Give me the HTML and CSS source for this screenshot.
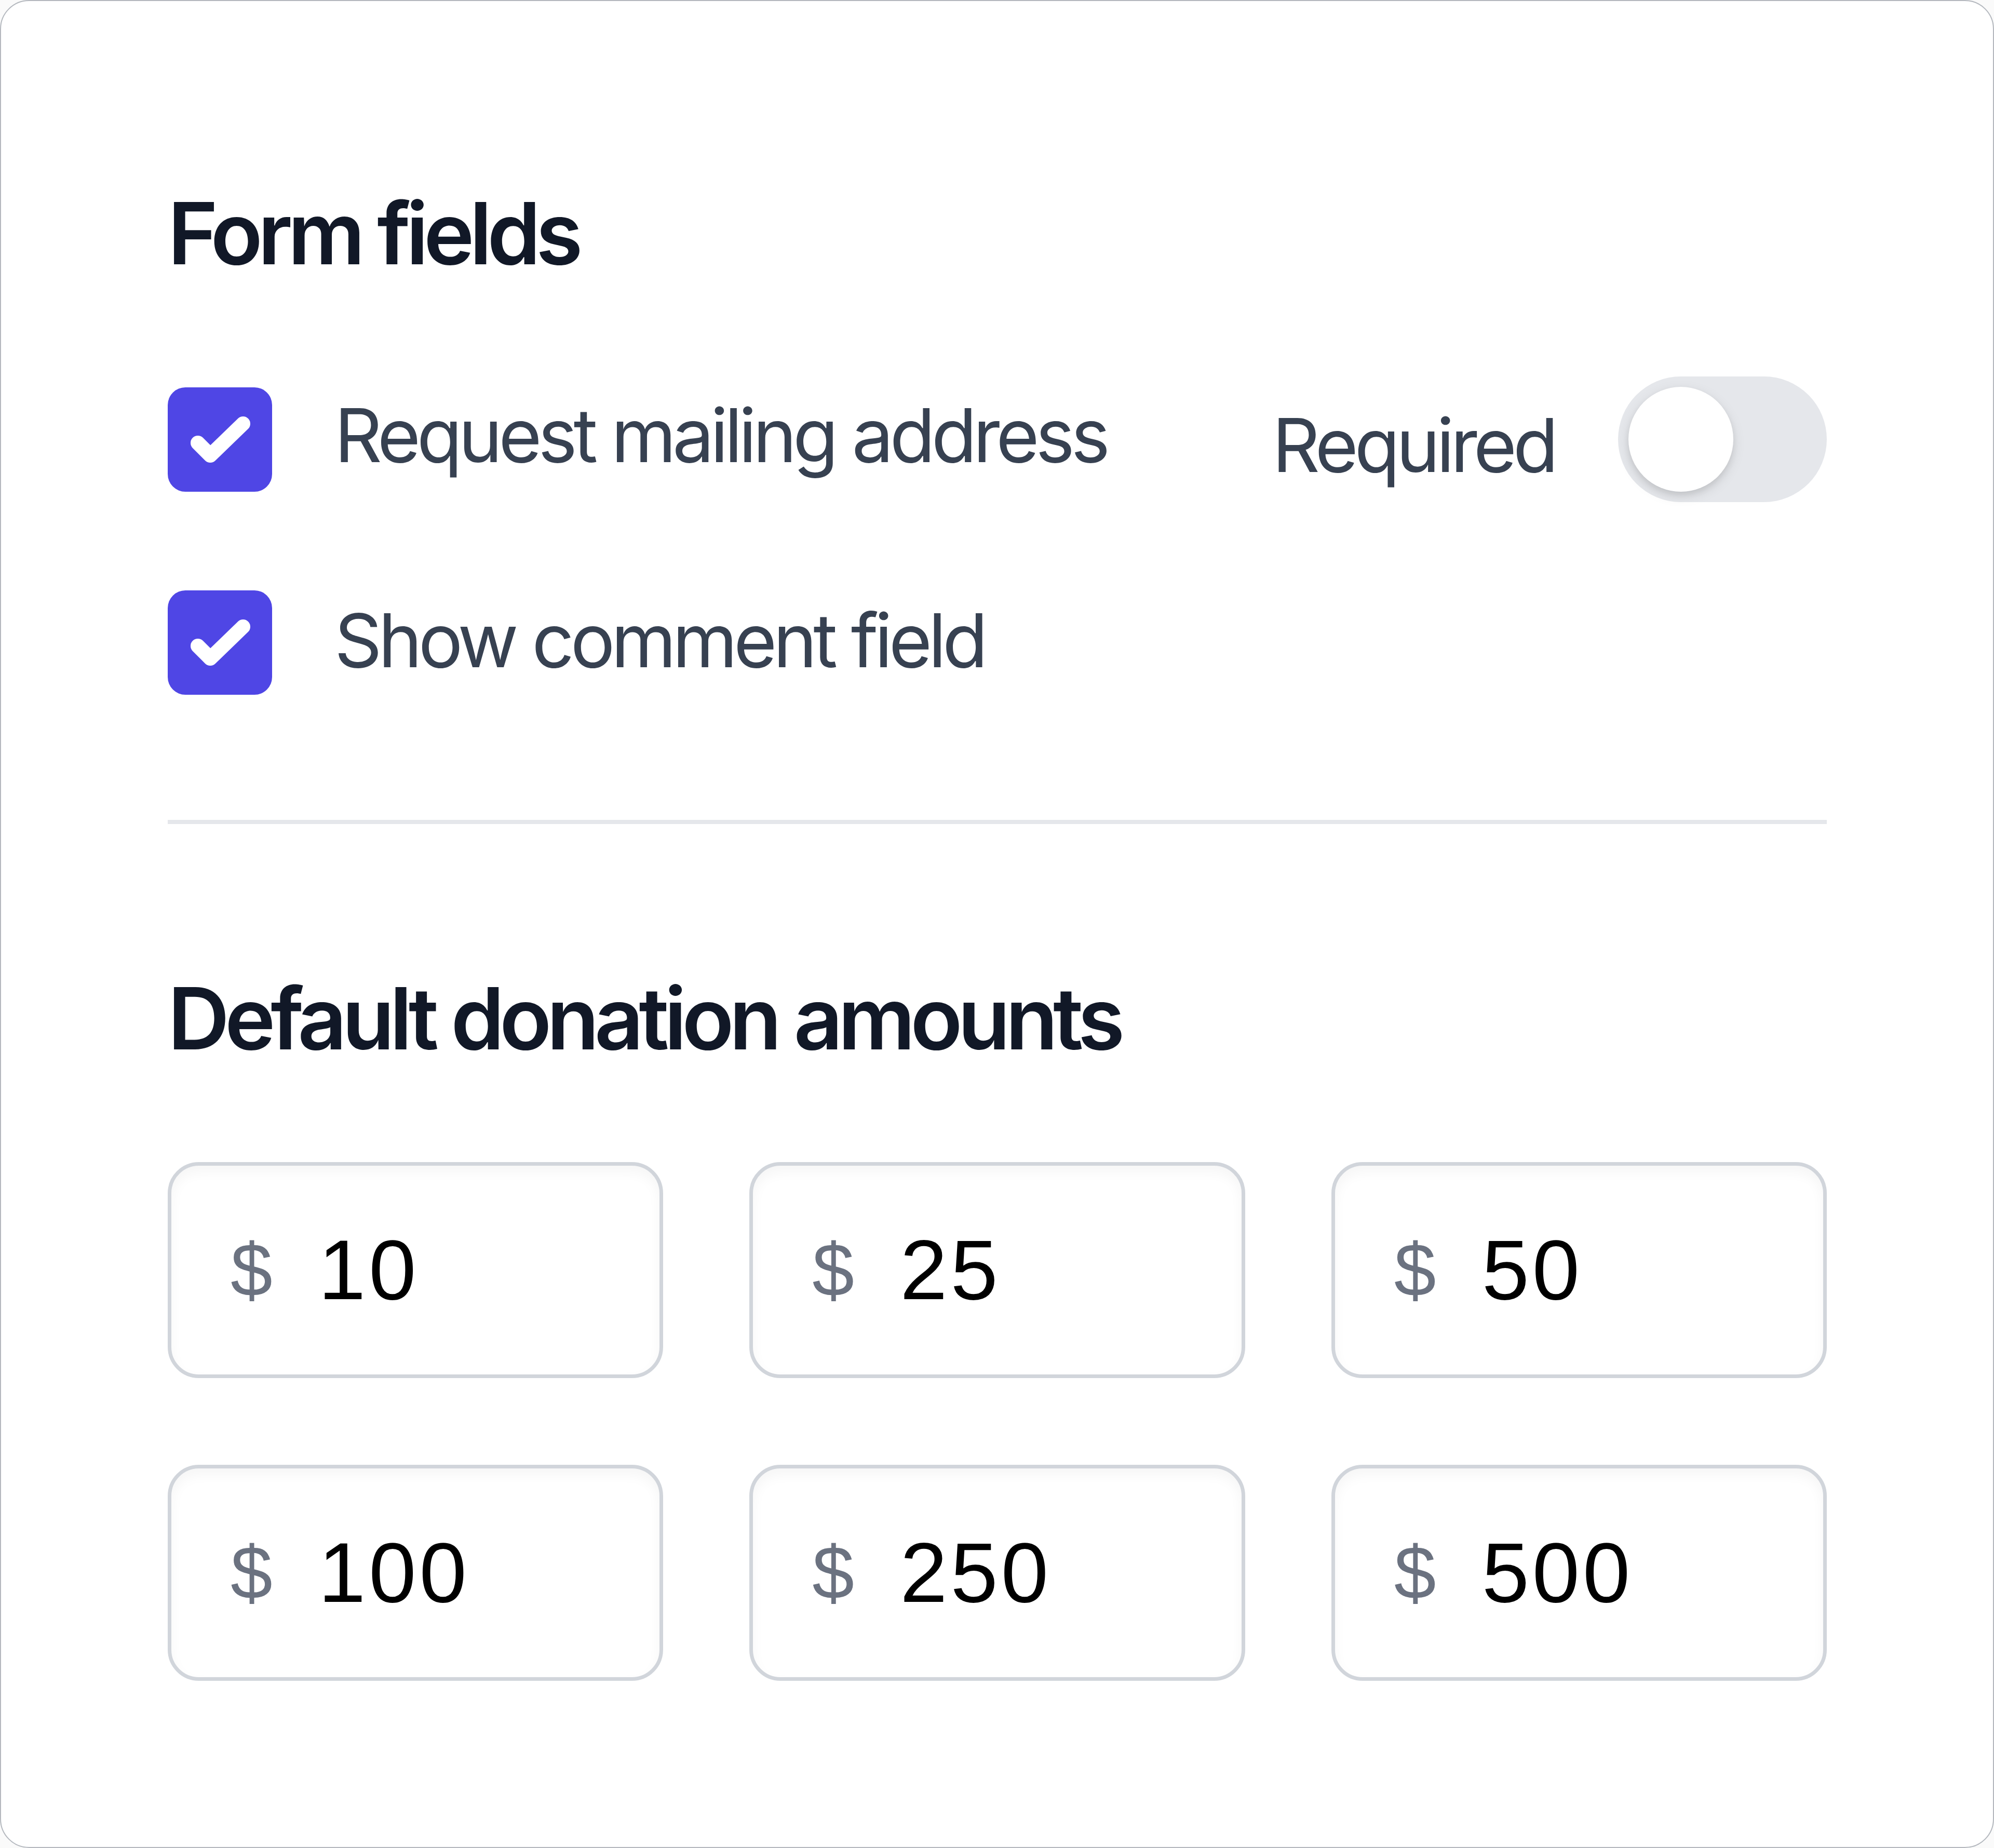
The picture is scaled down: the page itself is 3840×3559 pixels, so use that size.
FILE: index.html
```html
<!DOCTYPE html>
<html lang="en">
<head>
<meta charset="utf-8">
<title>Form settings</title>
<link rel="stylesheet" href="styles.css">
</head>
<body>
<div class="card">
  <section class="section">
    <h2 class="title">Form fields</h2>
    <div class="rows">
      <div class="row">
        <label class="check">
          <span class="box"><svg class="tick" viewBox="0 0 201 201"><polyline points="58,107 82,131 145,70"/></svg></span>
          <span class="check-label">Request mailing address</span>
        </label>
        <div class="required">
          <span class="required-label">Required</span>
          <span class="toggle"><span class="knob"></span></span>
        </div>
      </div>
      <div class="row">
        <label class="check">
          <span class="box"><svg class="tick" viewBox="0 0 201 201"><polyline points="58,107 82,131 145,70"/></svg></span>
          <span class="check-label check-label-alt">Show comment field</span>
        </label>
      </div>
    </div>
  </section>
  <hr class="divider">
  <section class="section">
    <h2 class="title">Default donation amounts</h2>
    <div class="amounts">
      <div class="amount"><span class="currency">$</span><span class="value">10</span></div>
      <div class="amount"><span class="currency">$</span><span class="value">25</span></div>
      <div class="amount"><span class="currency">$</span><span class="value">50</span></div>
      <div class="amount"><span class="currency">$</span><span class="value">100</span></div>
      <div class="amount"><span class="currency">$</span><span class="value">250</span></div>
      <div class="amount"><span class="currency">$</span><span class="value">500</span></div>
    </div>
  </section>
</div>
</body>
</html>
```

FILE: styles.css
```css
html, body {
  margin: 0;
  padding: 0;
  background: #fafafa;
}

.card {
  box-sizing: border-box;
  width: 3840px;
  height: 3559px;
  background: #ffffff;
  border: 2px solid #b4b8be;
  border-radius: 56px;
  padding: 321px 320px 322px 321px;
  font-family: Inter, "Noto Sans", sans-serif;
}

.section {
  display: block;
}

.title {
  margin: 0;
  font-size: 165px;
  line-height: 252px;
  font-weight: 600;
  letter-spacing: -0.056em;
  color: #111827;
}

.rows {
  display: flex;
  flex-direction: column;
  gap: 150px;
  margin-top: 150px;
}

.row {
  display: flex;
  align-items: center;
  justify-content: space-between;
  min-height: 240px;
}

.check {
  display: flex;
  align-items: center;
  gap: 120px;
}

.box {
  width: 201px;
  height: 201px;
  border-radius: 34px;
  background: #4f46e5;
  display: flex;
  flex-shrink: 0;
}

.tick {
  width: 201px;
  height: 201px;
  fill: none;
  stroke: #ffffff;
  stroke-width: 28;
  stroke-linecap: round;
  stroke-linejoin: round;
}

.check-label {
  font-size: 143px;
  line-height: 217px;
  letter-spacing: -0.051em;
  color: #374151;
  padding-bottom: 18px;
}

.check-label-alt {
  padding-bottom: 10px;
}

.required {
  display: flex;
  align-items: center;
  gap: 122px;
}

.required-label {
  font-size: 143px;
  line-height: 217px;
  letter-spacing: -0.051em;
  color: #374151;
  padding-top: 20px;
}

.toggle {
  box-sizing: border-box;
  width: 402px;
  height: 242px;
  border-radius: 121px;
  background: #e5e7eb;
  padding: 20px;
  display: flex;
}

.knob {
  width: 202px;
  height: 202px;
  border-radius: 50%;
  background: #ffffff;
  box-shadow: 0 8px 24px rgba(0, 0, 0, 0.10), 0 6px 12px rgba(0, 0, 0, 0.08);
}

.divider {
  border: 0;
  height: 8px;
  background: #e5e7eb;
  margin: 222px 0 248px;
}

.amounts {
  display: grid;
  grid-template-columns: repeat(3, 1fr);
  column-gap: 166px;
  row-gap: 167px;
  margin-top: 151px;
}

.amount {
  box-sizing: border-box;
  height: 416px;
  border: 7px solid #d1d5db;
  border-radius: 60px;
  background: #ffffff;
  display: flex;
  align-items: center;
  padding-left: 114px;
  box-shadow: inset 0 12px 24px rgba(0, 0, 0, 0.04);
}

.currency {
  font-family: "Liberation Sans", Arial, sans-serif;
  font-size: 145px;
  color: #6b7280;
  width: 169px;
}

.value {
  font-family: "Liberation Sans", Arial, sans-serif;
  font-size: 164px;
  letter-spacing: 6px;
  color: #000000;
}
```
